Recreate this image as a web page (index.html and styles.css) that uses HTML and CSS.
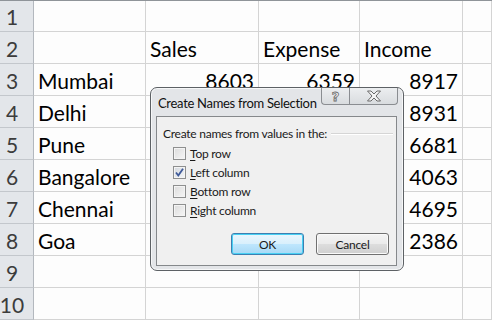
FILE: index.html
```html
<!DOCTYPE html>
<html>
<head>
<meta charset="utf-8">
<link rel="stylesheet" href="styles.css">
</head>
<body>
<div class="sheet">
  <div class="row"><div class="hdr">1</div><div class="c"></div><div class="c"></div><div class="c"></div><div class="c"></div><div class="c"></div></div>
  <div class="row"><div class="hdr">2</div><div class="c"></div><div class="c">Sales</div><div class="c">Expense</div><div class="c">Income</div><div class="c"></div></div>
  <div class="row"><div class="hdr">3</div><div class="c">Mumbai</div><div class="c n">8603</div><div class="c n">6359</div><div class="c n">8917</div><div class="c"></div></div>
  <div class="row"><div class="hdr">4</div><div class="c">Delhi</div><div class="c n"></div><div class="c n"></div><div class="c n">8931</div><div class="c"></div></div>
  <div class="row"><div class="hdr">5</div><div class="c">Pune</div><div class="c n"></div><div class="c n"></div><div class="c n">6681</div><div class="c"></div></div>
  <div class="row"><div class="hdr">6</div><div class="c">Bangalore</div><div class="c n"></div><div class="c n"></div><div class="c n">4063</div><div class="c"></div></div>
  <div class="row"><div class="hdr">7</div><div class="c">Chennai</div><div class="c n"></div><div class="c n"></div><div class="c n">4695</div><div class="c"></div></div>
  <div class="row"><div class="hdr">8</div><div class="c">Goa</div><div class="c n"></div><div class="c n"></div><div class="c n">2386</div><div class="c"></div></div>
  <div class="row"><div class="hdr">9</div><div class="c"></div><div class="c"></div><div class="c"></div><div class="c"></div><div class="c"></div></div>
  <div class="row"><div class="hdr">10</div><div class="c"></div><div class="c"></div><div class="c"></div><div class="c"></div><div class="c"></div></div>
</div>

<div class="dialog">
  <div class="titlebar">
    <div class="title">Create Names from Selection</div>
    <div class="capbtns">
      <div class="capbtn help"><span>?</span></div>
      <div class="capbtn close">
        <svg width="16" height="12" viewBox="0 0 16 12"><polygon points="1.5,1 5,1 8,4 11,1 14.5,1 10,6 14.5,11 11,11 8,8 5,11 1.5,11 6,6" fill="#f4f4f4" stroke="#6a6a6a" stroke-width="1" stroke-linejoin="round"/></svg>
      </div>
    </div>
  </div>
  <div class="client">
    <div class="group">Create names from values in the:</div>
    <div class="opts">
      <label class="opt"><span class="box"></span><span><u>T</u>op row</span></label>
      <label class="opt"><span class="box checked"><svg width="11" height="11" viewBox="0 0 11 11"><path d="M2 5.5 L4.3 8.5 L9 1.8" fill="none" stroke="#3f5a99" stroke-width="1.8"/></svg></span><span><u>L</u>eft column</span></label>
      <label class="opt"><span class="box"></span><span><u>B</u>ottom row</span></label>
      <label class="opt"><span class="box"></span><span><u>R</u>ight column</span></label>
    </div>
    <div class="buttons">
      <div class="btn ok">OK</div>
      <div class="btn">Cancel</div>
    </div>
  </div>
</div>
</body>
</html>
```
FILE: styles.css
```css
html, body {
  margin: 0;
  padding: 0;
  background: #ffffff;
}
body {
  width: 492px;
  height: 321px;
  overflow: hidden;
  position: relative;
}
.sheet {
  border-top: 1px solid #8f9499;
  font-family: Lato, "Open Sans", sans-serif;
}
.row {
  display: grid;
  grid-template-columns: 34px 112px 113px 101px 103px 1fr;
  height: 32px;
  box-sizing: border-box;
}
.row:first-child {
  height: 31px;
}
.hdr, .c {
  border-bottom: 1px solid #d4d4d4;
  border-right: 1px solid #d4d4d4;
  display: flex;
  align-items: flex-end;
  padding: 0 4px 2px 4px;
  font-size: 21px;
  line-height: 24px;
  color: #000;
  white-space: nowrap;
  overflow: hidden;
}
.c {
  background: #fdfdfd;
}
.c.n {
  justify-content: flex-end;
}
.hdr {
  background: #e3e6ea;
  border-right: 1px solid #b3b8be;
  border-bottom: 1px solid #c3c7cc;
  color: #3c3c3c;
  justify-content: center;
  padding: 0 9px 2px 0;
}

/* dialog */
.dialog {
  position: absolute;
  left: 150px;
  top: 87px;
  width: 254px;
  height: 184px;
  box-sizing: border-box;
  border: 1px solid #5d6165;
  border-radius: 7px;
  background: #e3e5e8;
  box-shadow: inset 0 0 0 1px #f6f7f8;
  padding: 0 6px 4px 5px;
  display: flex;
  flex-direction: column;
  font-family: Lato, "Open Sans", sans-serif;
  font-size: 12px;
  letter-spacing: -0.25px;
  color: #1a1a1a;
}
.titlebar {
  height: 28px;
  display: flex;
  align-items: flex-start;
  flex: none;
}
.title {
  padding: 7px 0 0 2px;
  font-size: 13px;
  letter-spacing: -0.3px;
  white-space: nowrap;
  color: #111;
}
.capbtns {
  margin-left: auto;
  margin-right: -1px;
  display: flex;
  flex: none;
}
.capbtn {
  height: 17px;
  box-sizing: border-box;
  border: 1px solid #8a8d91;
  border-top: none;
  background: linear-gradient(#eceef0, #d9dcdf);
  display: flex;
  align-items: center;
  justify-content: center;
}
.help {
  width: 28px;
  border-radius: 0 0 0 4px;
  border-right: none;
}
.help span {
  font-family: "DejaVu Sans", sans-serif;
  font-weight: bold;
  font-size: 13px;
  color: #f4f4f4;
  -webkit-text-stroke: 0.8px #6a6a6a;
  line-height: 13px;
}
.close {
  width: 49px;
  border-radius: 0 0 4px 0;
}
.client {
  flex: 1;
  background: #f0f0f0;
  border: 1px solid #85888b;
  display: flex;
  flex-direction: column;
  padding: 8px 0 0 6px;
}
.group {
  display: flex;
  align-items: center;
  gap: 4px;
  margin-right: 3px;
  height: 16px;
  white-space: nowrap;
}
.group::after {
  content: "";
  flex: 1;
  border-top: 1px solid #d5d5d5;
  border-bottom: 1px solid #ffffff;
  margin-top: 1px;
}
.opts {
  display: flex;
  flex-direction: column;
  margin: 3px 0 0 10px;
}
.opt {
  display: flex;
  align-items: center;
  gap: 4px;
  height: 19px;
}
.box {
  width: 13px;
  height: 13px;
  box-sizing: border-box;
  border: 1px solid #8e8f8f;
  background: linear-gradient(135deg, #dcdcdc, #f6f6f6);
  box-shadow: inset 0 0 0 1px #f4f4f4;
  display: flex;
  align-items: center;
  justify-content: center;
}
.box.checked {
  background: linear-gradient(135deg, #d4d8de, #f4f6f8);
}
.opt u {
  text-decoration-thickness: 1px;
  text-underline-offset: 2px;
}
.buttons {
  margin-top: auto;
  display: flex;
  justify-content: flex-end;
  gap: 12px;
  padding: 0 7px 10px 0;
}
.btn {
  width: 73px;
  height: 22px;
  box-sizing: border-box;
  border: 1px solid #707070;
  border-radius: 3px;
  background: linear-gradient(#f4f4f4 0%, #ebebeb 48%, #dddddd 52%, #cfcfcf 100%);
  box-shadow: inset 0 0 0 1px #fafafa;
  display: flex;
  align-items: center;
  justify-content: center;
  font-size: 12px;
}
.btn.ok {
  border-color: #3c7fb1;
  background: linear-gradient(#eaf6fd 0%, #d9f0fc 48%, #bee6fd 52%, #a7d9f5 100%);
  box-shadow: inset 0 0 0 1px #48d0f3;
}
```
